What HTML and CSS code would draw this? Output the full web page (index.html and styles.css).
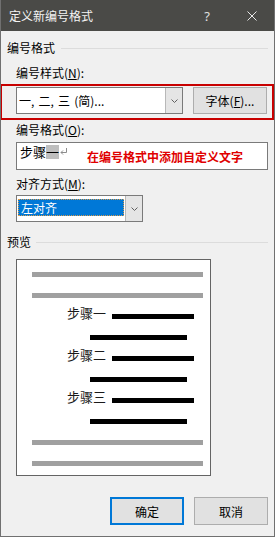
FILE: index.html
```html
<!DOCTYPE html>
<html lang="zh-CN">
<head>
<meta charset="utf-8">
<title>定义新编号格式</title>
<link rel="stylesheet" href="styles.css">
</head>
<body>
<div class="win">
  <div class="titlebar">
    <span class="title">定义新编号格式</span>
    <span class="help">?</span>
    <svg class="close" width="10" height="10" viewBox="0 0 10 10"><path d="M0.5 0.5 L9.5 9.5 M9.5 0.5 L0.5 9.5" stroke="#e8e8e8" stroke-width="1" fill="none"/></svg>
  </div>
  <div class="content">
    <div class="group-head"><span>编号格式</span><i class="rule"></i></div>
    <div class="indent">
      <div class="label l1">编号样式(<u>N</u>):</div>
      <div class="row">
        <div class="combo wide">
          <span class="val">一, 二, 三 (简)...</span>
          <span class="drop"><svg width="7" height="4" viewBox="0 0 7 4"><path d="M0.5 0.5 L3.5 3.5 L6.5 0.5" stroke="#606060" fill="none"/></svg></span>
        </div>
        <div class="btn fontbtn">字体(<u>F</u>)...</div>
      </div>
      <div class="label l2">编号格式(<u>O</u>):</div>
      <div class="textbox">
        <span class="tb-text">步骤<span class="hl">一</span><svg class="ret" width="7" height="7" viewBox="0 0 7 7"><path d="M6.5 0 L6.5 4.5 L1 4.5 M3 2.5 L1 4.5 L3 6.5" stroke="#8c8c8c" fill="none"/></svg></span>
        <span class="note">在编号格式中添加自定义文字</span>
      </div>
      <div class="label l3">对齐方式(<u>M</u>):</div>
      <div class="combo narrow">
        <span class="sel">左对齐</span>
        <span class="drop"><svg width="7" height="4" viewBox="0 0 7 4"><path d="M0.5 0.5 L3.5 3.5 L6.5 0.5" stroke="#606060" fill="none"/></svg></span>
      </div>
    </div>
    <div class="group-head g2"><span>预览</span><i class="rule"></i></div>
    <div class="indent">
      <div class="preview">
        <i class="pl gray"></i>
        <i class="pl gray"></i>
        <div class="step"><span>步骤一</span><i class="pl black long"></i></div>
        <i class="pl black cont"></i>
        <div class="step"><span>步骤二</span><i class="pl black long"></i></div>
        <i class="pl black cont"></i>
        <div class="step"><span>步骤三</span><i class="pl black long"></i></div>
        <i class="pl black cont"></i>
        <i class="pl gray"></i>
        <i class="pl gray"></i>
      </div>
    </div>
    <div class="buttons">
      <div class="btn ok">确定</div>
      <div class="btn">取消</div>
    </div>
  </div>
  <div class="redbox"></div>
</div>
</body>
</html>
```

FILE: styles.css
```css
html, body {
  margin: 0;
  padding: 0;
  background: #f0f0f0;
}
body {
  font-family: "Microsoft YaHei UI", "Noto Sans CJK SC", sans-serif;
  font-size: 12px;
  color: #000;
}
.win {
  position: relative;
  width: 275px;
  height: 537px;
  box-sizing: border-box;
  border: 1px solid #707070;
  border-top: none;
  background: #f0f0f0;
  overflow: hidden;
}
.titlebar {
  display: flex;
  align-items: center;
  height: 31px;
  margin: 0 -1px;
  background: #4a4a47;
  color: #f4f4f4;
}
.title {
  padding-left: 9px;
  font-size: 12px;
  line-height: 16px;
  flex: 1;
}
.help {
  width: 14px;
  text-align: center;
  font-family: "Noto Sans", sans-serif;
  font-size: 13px;
  line-height: 16px;
  color: #e0e0e0;
  margin-right: 33px;
}
.close {
  display: block;
  margin-right: 18px;
}
.content {
  padding: 0 6px;
}
.group-head {
  display: flex;
  align-items: center;
  height: 16px;
  line-height: 16px;
  margin-top: 9px;
}
.group-head .rule {
  flex: 1;
  height: 1px;
  margin-left: 6px;
  margin-top: 1px;
  background: #dcdcdc;
}
.group-head.g2 {
  margin-top: 12px;
}
.group-head.g2 .rule {
  margin-left: 5px;
}
.indent {
  padding-left: 9px;
}
.label {
  height: 16px;
  line-height: 16px;
}
.label u {
  text-underline-offset: 1px;
}
.l1 { margin-top: 9px; }
.l2 { margin-top: 8px; }
.l3 { margin-top: 6px; }
.row {
  display: flex;
  margin-top: 6px;
  height: 27px;
}
.combo {
  display: flex;
  box-sizing: border-box;
  height: 27px;
  border: 1px solid #7a7a7a;
  background: #fff;
}
.combo.wide {
  width: 167px;
}
.combo .val {
  flex: 1;
  padding-left: 2px;
  line-height: 25px;
  font-size: 12px;
  word-spacing: 1.5px;
}
.combo .drop {
  width: 16px;
  display: flex;
  align-items: center;
  justify-content: center;
  background: #e5e5e5;
  border-left: 1px solid #b8b8b8;
}
.combo.narrow {
  width: 127px;
  margin-top: 3px;
}
.combo .sel {
  flex: 1;
  box-sizing: border-box;
  height: 17px;
  margin: 3px 1px 0 1px;
  padding-left: 2px;
  line-height: 15px;
  background: #0078d7;
  color: #fff;
  border: 1px dotted #d89a4c;
}
.btn {
  box-sizing: border-box;
  width: 74px;
  height: 28px;
  display: flex;
  align-items: center;
  justify-content: center;
  background: #e1e1e1;
  border: 1px solid #adadad;
  font-size: 12px;
}
.fontbtn {
  height: 27px;
  margin-left: 10px;
}
.btn.ok {
  border: 2px solid #0078d7;
}
.textbox {
  position: relative;
  box-sizing: border-box;
  width: 252px;
  height: 28px;
  margin-top: 4px;
  border: 1px solid #7a7a7a;
  background: #fff;
}
.tb-text {
  display: block;
  padding: 2px 0 0 3px;
  font-size: 13px;
  line-height: 14px;
  height: 14px;
}
.hl {
  display: inline-block;
  background: #bebebe;
  line-height: 14px;
  height: 14px;
  vertical-align: top;
}
.ret {
  display: inline-block;
  vertical-align: top;
  margin-top: 3px;
  margin-left: 1px;
}
.note {
  position: absolute;
  left: 70px;
  top: 0;
  bottom: 0;
  display: flex;
  align-items: center;
  font-weight: bold;
  font-size: 12px;
  color: #e00000;
  white-space: nowrap;
}
.preview {
  box-sizing: border-box;
  width: 195px;
  height: 217px;
  margin-top: 9px;
  padding-top: 12px;
  border: 1px solid #646464;
  background: #fff;
  display: flex;
  flex-direction: column;
  gap: 16px;
}
.pl {
  display: block;
  height: 5px;
}
.pl.gray {
  background: #a0a0a0;
  width: 171px;
  margin-left: 15px;
}
.pl.black {
  background: #000;
}
.pl.long {
  width: 82px;
  margin-left: 6px;
}
.pl.cont {
  width: 97px;
  margin-left: 73px;
}
.step {
  display: flex;
  align-items: flex-end;
  height: 5px;
  padding-left: 50px;
}
.step span {
  font-size: 13px;
  line-height: 13px;
  margin-bottom: 0;
  color: #1a1a1a;
  white-space: nowrap;
}
.buttons {
  display: flex;
  justify-content: flex-end;
  gap: 10px;
  margin-top: 21px;
}
.redbox {
  position: absolute;
  left: -1px;
  top: 84px;
  width: 274px;
  height: 36px;
  box-sizing: border-box;
  border: 2px solid #c80000;
}
```
